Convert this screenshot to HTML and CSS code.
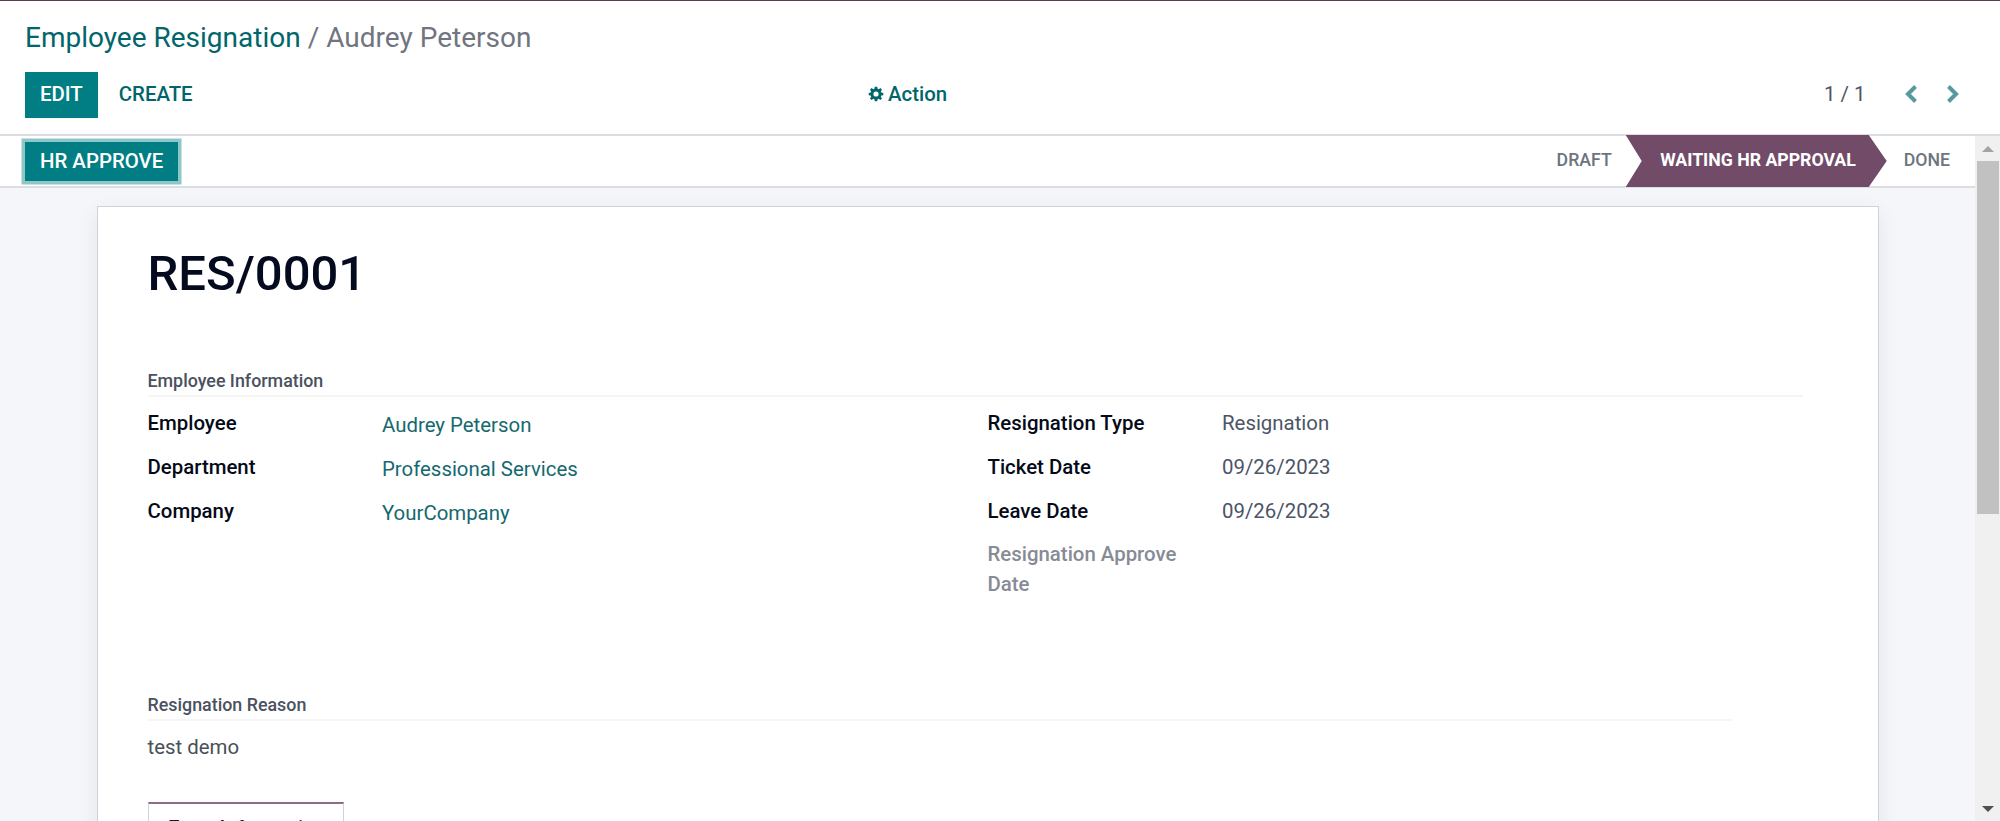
FILE: index.html
```html
<!DOCTYPE html>
<html lang="en">
<head>
<meta charset="utf-8">
<title>Employee Resignation</title>
<link rel="stylesheet" href="styles.css">
</head>
<body>
<header class="control-panel">
  <nav class="breadcrumb"><a class="crumb-link">Employee Resignation</a><span class="crumb-sep">/</span><span class="crumb-current">Audrey Peterson</span></nav>
  <div class="toolbar">
    <div class="toolbar-left"><button class="btn btn-primary btn-edit">EDIT</button><button class="btn btn-link">CREATE</button></div>
    <div class="action"><svg class="gear" viewBox="0 0 16 16"><path fill-rule="evenodd" d="M6.8.8h2.4l.4 2 1.1.5 1.7-1.2 1.6 1.6-1.2 1.7.5 1.1 2 .4v2.300l-2 .4-.5 1.100 1.200 1.700-1.600 1.600-1.700-1.200-1.100.5-.4 2H6.800l-.4-2-1.100-.5-1.700 1.200L2 12.400l1.200-1.700-.5-1.100-2-.4V6.900l2-.4.5-1.100L2 3.700l1.600-1.600 1.700 1.200 1.100-.5zM8 5.400a2.600 2.600 0 1 0 0 5.200 2.600 2.600 0 0 0 0-5.200z"/></svg><span>Action</span></div>
    <div class="pager"><span class="pager-count">1 / 1</span>
      <svg class="chev" viewBox="0 0 12 18"><path d="M10.500 1.500L3 9l7.500 7.500"/></svg>
      <svg class="chev" viewBox="0 0 12 18"><path d="M1.500 1.500L9 9l-7.500 7.500"/></svg>
    </div>
  </div>
</header>
<div class="content">
  <main class="form-view">
    <div class="statusbar">
      <button class="btn btn-primary btn-approve">HR APPROVE</button>
      <div class="stages"><span class="stage draft">DRAFT</span><span class="stage current">WAITING HR APPROVAL</span><span class="stage done">DONE</span></div>
    </div>
    <div class="sheet-bg">
      <section class="sheet">
        <h1 class="title">RES/0001</h1>
        <h2 class="group-title info-title">Employee Information</h2>
        <div class="columns">
          <dl class="fields">
            <dt>Employee</dt><dd class="link">Audrey Peterson</dd>
            <dt>Department</dt><dd class="link">Professional Services</dd>
            <dt>Company</dt><dd class="link">YourCompany</dd>
          </dl>
          <dl class="fields">
            <dt>Resignation Type</dt><dd>Resignation</dd>
            <dt>Ticket Date</dt><dd>09/26/2023</dd>
            <dt>Leave Date</dt><dd>09/26/2023</dd>
            <dt class="empty">Resignation Approve Date</dt><dd></dd>
          </dl>
        </div>
        <h2 class="group-title reason-title">Resignation Reason</h2>
        <p class="reason">test demo</p>
        <div class="tabs"><a class="tab">Extra Information</a></div>
      </section>
    </div>
  </main>
  <aside class="scrollbar">
    <svg class="arrow" viewBox="0 0 12 6"><path fill="#a3a3a3" d="M0 6l6-6 6 6z"/></svg>
    <div class="thumb"></div>
    <svg class="arrow down" viewBox="0 0 12 6"><path fill="#505050" d="M0 0h12L6 6z"/></svg>
  </aside>
</div>
</body>
</html>
```
FILE: styles.css
```css
* { box-sizing: border-box; }
body {
  margin: 0;
  height: 821px;
  overflow: hidden;
  display: flex;
  flex-direction: column;
  font-family: Roboto, "Liberation Sans", sans-serif;
  font-size: 20.4px;
  line-height: 30px;
  color: #495057;
  background: #fff;
}
h1, h2, p, dl, dd { margin: 0; }

.control-panel {
  flex: none;
  height: 136px;
  border-top: 1px solid #5b3b53;
  border-bottom: 2px solid #dcdde2;
  padding: 17px 41px 0 25px;
}
.breadcrumb {
  font-size: 28px;
  line-height: 40px;
  height: 40px;
  white-space: pre;
  color: #71757f;
}
.crumb-link { color: #01666b; }
.crumb-sep { margin: 0 7px; }
.toolbar {
  display: grid;
  grid-template-columns: 843px 1fr auto;
  align-items: center;
  height: 46px;
  margin-top: 14px;
}
.toolbar-left { display: flex; gap: 6px; }
.btn {
  border: 0;
  padding: 0 15px;
  font: 500 20.4px/44px Roboto, sans-serif;
  white-space: nowrap;
}
.btn-primary { background: #017e84; color: #fff; }
.toolbar .btn { height: 46px; padding-bottom: 2px; line-height: 42px; }
.btn-link { background: none; color: #01666b; }
.action { display: flex; align-items: center; gap: 4px; font-weight: 500; color: #01666b; padding-bottom: 2px; }
.gear { width: 16px; height: 16px; fill: currentColor; }
.pager { display: flex; align-items: center; color: #4c5467; padding-bottom: 2px; }
.pager-count { margin-right: 39.500px; }
.chev { width: 12px; height: 18px; fill: none; stroke: #569a9d; stroke-width: 4; }
.chev + .chev { margin-left: 30px; }

.content { flex: 1; display: flex; min-height: 0; }
.form-view { flex: 1; display: flex; flex-direction: column; min-width: 0; }
.statusbar {
  flex: none;
  height: 52px;
  display: flex;
  align-items: center;
  justify-content: space-between;
  padding: 0 25px;
  border-bottom: 2px solid #dcdde2;
}
.btn-approve { height: 39px; line-height: 38px; box-shadow: 0 0 0 3.500px #8fc6c8; }
.stages { display: flex; font-size: 17.700px; font-weight: 500; color: #6c757d; align-self: stretch; line-height: 48px; }
.stage.draft { padding-right: 14px; }
.stage.current {
  color: #fff;
  font-weight: 700;
  background: #714b67;
  margin: -1px 0;
  line-height: 50px;
  padding-left: 34.500px;
  clip-path: polygon(0 0, 243px 0, 100% 50%, 243px 100%, 0 100%, 16px 50%);
  width: 261px;
}
.stage.done { padding-left: 17px; }

.sheet-bg { flex: 1; min-height: 0; background: #f4f6fa; padding: 18px 96px 0 97px; overflow: hidden; }
.sheet {
  height: 900px;
  background: #fff;
  border: 1px solid #ced2da;
  box-shadow: 0 7px 22px rgba(0, 0, 0, .07);
  padding: 32px 75px 0 49.500px;
}
.title { font-size: 49px; font-weight: 500; line-height: 70px; color: #040b1e; }
.group-title {
  font-size: 17.850px;
  line-height: 26px;
  font-weight: 500;
  color: #4a5160;
  border-bottom: 2px solid #f5f5f6;
  height: 34px;
  padding-top: 4.500px;
}
.info-title { margin-top: 54px; }
.columns { display: grid; grid-template-columns: 1fr 1fr; column-gap: 24.500px; margin-top: 11px; }
.fields {
  display: grid;
  grid-template-columns: 208.500px 1fr;
  column-gap: 26px;
  row-gap: 13.800px;
  align-content: start;
}
dt { font-weight: 500; color: #040a18; }
dt.empty { color: #868b95; }
dd { color: #4c5467; white-space: nowrap; }
dd.link { color: #15696e; padding-top: 2px; margin-bottom: -2px; }
.reason-title { margin: 88px 71px 0 0; }
.reason { margin-top: 11px; }
.tabs { margin-top: 40px; display: flex; }
.tab {
  border: 1px solid #ced2da;
  border-top: 2px solid #8e6c85;
  width: 196px;
  padding: 9px 0 10px 19.500px;
  font-weight: 500;
  color: #111827;
  white-space: nowrap;
}

.scrollbar {
  width: 25px;
  background: #f0f0f0;
  display: flex;
  flex-direction: column;
  align-items: center;
  padding: 10px 0 9px 1px;
}
.arrow { width: 12px; height: 6px; }
.arrow.down { margin-top: auto; }
.thumb { width: 22px; height: 353px; background: #c1c1c1; margin-top: 9px; }
```
